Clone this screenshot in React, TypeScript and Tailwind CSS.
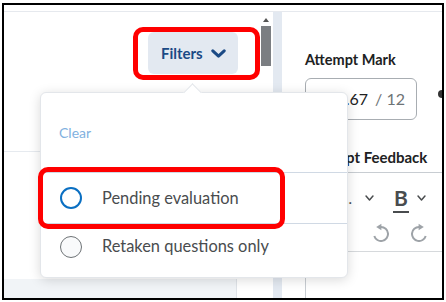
import React from "react";

function Chevron({ className, w = 9, h = 6, sw = 1.5, color = "#494c4e" }: { className?: string; w?: number; h?: number; sw?: number; color?: string }) {
  return (
    <svg className={className} width={w} height={h} viewBox={`0 0 ${w} ${h}`} fill="none">
      <path d={`M${sw / 2 + 0.3} ${sw / 2 + 0.3} L${w / 2} ${h - sw / 2 - 0.3} L${w - sw / 2 - 0.3} ${sw / 2 + 0.3}`} stroke={color} strokeWidth={sw} strokeLinecap="round" strokeLinejoin="round" />
    </svg>
  );
}

function Undo({ redo = false }: { redo?: boolean }) {
  return (
    <svg width="18" height="19" viewBox="0 0 18 19" fill="none" style={redo ? { transform: "scaleX(-1)" } : undefined}>
      <path d="M9 4 A7 7 0 1 1 2.3 13" stroke="#9ea3a8" strokeWidth="2" fill="none" />
      <polygon points="4.2,4 9.4,0.8 9.4,7.2" fill="#9ea3a8" />
    </svg>
  );
}

export default function App() {
  return (
    <div className="relative w-[446px] h-[302px] bg-white overflow-hidden pl-[2px] pt-[3px] font-[Lato,sans-serif]">
      {/* frame */}
      <div className="w-[442px] h-[297px] border-2 border-black flex flex-col overflow-hidden">
        <div className="h-[7px] shrink-0 border-b border-[#e6e9ee]" />
        <div className="flex flex-1 min-h-0">
          {/* left panel */}
          <div className="w-[255px] shrink-0 flex flex-col">
            <div className="h-[140px] shrink-0 border-b border-[#e6eaef] flex justify-end items-start pr-[21px] pt-[20px]">
              <div className="w-[90px] h-[42px] rounded-[6px] bg-[#e3e9f1] flex items-center pl-[13px] gap-[8px]">
                <span className="text-[15px] font-bold text-[#1b4a85] leading-none">Filters</span>
                <Chevron w={15} h={9} sw={3} color="#1b4a85" />
              </div>
            </div>
            <div className="flex-1" />
            <div className="h-[19px] shrink-0 flex">
              <div className="w-[233px] h-full bg-[#f1f4f7] border-r border-[#dfe3e8]" />
            </div>
          </div>
          {/* scrollbar */}
          <div className="w-[12px] shrink-0 flex flex-col pl-[2px]">
            <div className="w-[10px] mt-[6px] flex justify-center">
              <svg width="6" height="4" viewBox="0 0 6 4">
                <polygon points="3,0 6,4 0,4" fill="#555" />
              </svg>
            </div>
            <div className="w-[10px] h-[40px] mt-[4px] bg-[#7b7e82]" />
          </div>
          <div className="w-[2px] shrink-0" />
          <div className="w-[9px] shrink-0 bg-[#e3e9f1]" />
          {/* right panel */}
          <div className="flex-1 min-w-0 flex flex-col pl-[23px] pt-[38px]">
            <div className="text-[14.5px] leading-[20px] font-bold text-[#202122] whitespace-nowrap">Attempt Mark</div>
            <div className="mt-2 flex items-start">
              <div className="w-[112px] h-[42px] shrink-0 border border-[#a8adb2] rounded-[6px] flex items-center justify-end pr-[11px] gap-[7px]">
                <span className="text-[16px] text-[#202122]">11.67</span>
                <span className="text-[16px] text-[#6e7376]">/ 12</span>
              </div>
              <div className="ml-[21px] mt-[12px] w-[8px] h-[8px] shrink-0 rounded-full bg-[#333]" />
            </div>
            <div className="mt-[27px] text-[15px] leading-[20px] font-bold text-[#202122] whitespace-nowrap">Attempt Feedback</div>
            <div className="mt-[5px] flex-1 border-t border-l border-[#c8cdd2] flex flex-col">
              <div className="h-[79px] border-b border-[#d6d9dc] flex flex-col">
                <div className="h-[50px] flex items-center">
                  <div className="w-[46px] text-right text-[15px] text-[#494c4e] whitespace-nowrap overflow-hidden">Lato...</div>
                  <Chevron className="ml-[13px] shrink-0" w={9} h={6} />
                  <div className="ml-[19px] flex flex-col items-center mt-[4px] shrink-0">
                    <span className="text-[21px] font-bold leading-none text-[#494c4e]">B</span>
                    <div className="w-[16px] h-[2px] bg-[#494c4e] mt-[3px]" />
                  </div>
                  <Chevron className="ml-[8px] shrink-0" w={9} h={6} />
                </div>
                <div className="h-[19px] flex items-center">
                  <div className="w-[31px] shrink-0" />
                  <Chevron className="shrink-0" w={8} h={5} />
                  <div className="ml-[27px] shrink-0 flex"><Undo /></div>
                  <div className="ml-[20px] shrink-0 flex"><Undo redo /></div>
                </div>
              </div>
            </div>
          </div>
        </div>
      </div>

      {/* filter popup */}
      <div className="absolute left-[40px] top-[92px] w-[308px] h-[186px] bg-white rounded-[6px] border border-[#e3e6ea] shadow-[0_2px_12px_rgba(0,0,0,0.15)]">
        <div className="absolute left-[145px] top-[-7px] w-[13px] h-[13px] bg-white border-t border-l border-[#e3e6ea] rotate-45" />
        <div className="relative flex flex-col">
          <div className="h-[79px] pt-[27px] pl-[18px]">
            <span className="text-[14px] leading-[20px] text-[#81b1e0]">Clear</span>
          </div>
          <div className="h-[51px] border-t border-[#d0d9e4] flex items-center pl-[19px] gap-[20px]">
            <div className="w-[22px] h-[22px] rounded-full border-2 border-[#0a6fc2] bg-white shrink-0" />
            <span className="text-[16.4px] text-[#494c4e] whitespace-nowrap">Pending evaluation</span>
          </div>
          <div className="h-[46px] border-t border-[#d0d9e4] flex items-center pl-[19px] gap-[20px]">
            <div className="w-[22px] h-[22px] rounded-full border border-[#6e7376] bg-[#f9fafb] shrink-0" />
            <span className="text-[16.4px] text-[#494c4e] whitespace-nowrap">Retaken questions only</span>
          </div>
        </div>
      </div>

      {/* red annotation boxes */}
      <div className="absolute left-[133px] top-[27px] w-[127px] h-[53px] border-[5px] border-[#f00] rounded-[10px]" />
      <div className="absolute left-[38px] top-[167px] w-[247px] h-[62px] border-[5px] border-[#f00] rounded-[10px]" />
    </div>
  );
}
